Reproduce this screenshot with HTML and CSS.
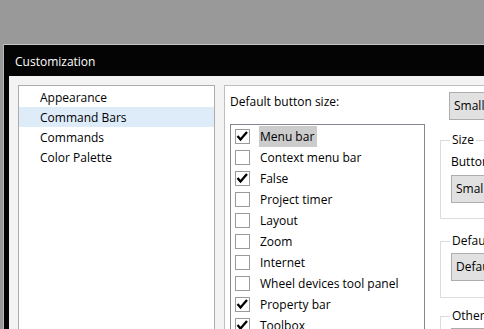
FILE: index.html
```html
<!DOCTYPE html>
<html>
<head>
<meta charset="utf-8">
<link rel="stylesheet" href="styles.css">
</head>
<body>
<div class="window">
  <div class="titlebar">Customization</div>
  <div class="client">
    <ul class="nav">
      <li>Appearance</li>
      <li class="selected">Command Bars</li>
      <li>Commands</li>
      <li>Color Palette</li>
    </ul>
    <div class="main">
      <div class="label-top">Default button size:</div>
      <div class="top-btn-cell"><div class="btn">Small</div></div>
      <ul class="checklist">
        <li><span class="cb checked"><svg viewBox="0 0 15 15"><path d="M2.5 7 L5.5 10.5 L12 3"/></svg></span><span class="txt hl">Menu bar</span></li>
        <li><span class="cb"></span><span class="txt">Context menu bar</span></li>
        <li><span class="cb checked"><svg viewBox="0 0 15 15"><path d="M2.5 7 L5.5 10.5 L12 3"/></svg></span><span class="txt">False</span></li>
        <li><span class="cb"></span><span class="txt">Project timer</span></li>
        <li><span class="cb"></span><span class="txt">Layout</span></li>
        <li><span class="cb"></span><span class="txt">Zoom</span></li>
        <li><span class="cb"></span><span class="txt">Internet</span></li>
        <li><span class="cb"></span><span class="txt">Wheel devices tool panel</span></li>
        <li><span class="cb checked"><svg viewBox="0 0 15 15"><path d="M2.5 7 L5.5 10.5 L12 3"/></svg></span><span class="txt">Property bar</span></li>
        <li><span class="cb checked"><svg viewBox="0 0 15 15"><path d="M2.5 7 L5.5 10.5 L12 3"/></svg></span><span class="txt">Toolbox</span></li>
      </ul>
      <div class="groups">
        <fieldset class="group g-size">
          <legend>Size</legend>
          <div class="glabel">Button size:</div>
          <div class="btn">Small</div>
        </fieldset>
        <fieldset class="group g-default">
          <legend>Default</legend>
          <div class="btn">Default</div>
        </fieldset>
        <fieldset class="group g-other">
          <legend>Other</legend>
          <div class="btn">Options</div>
        </fieldset>
      </div>
    </div>
  </div>
</div>
</body>
</html>
```

FILE: styles.css
```css
* { box-sizing: border-box; }
html, body {
  margin: 0;
  padding: 0;
}
body {
  background: #999999;
  height: 329px;
  overflow: hidden;
  font-family: "Open Sans", "Noto Sans", sans-serif;
  font-size: 12px;
  color: #000;
}
.window {
  margin: 44px 0 0 3px;
  width: 560px;
  height: 400px;
  background: #040404;
  border-top: 1px solid #c4c4c4;
  border-left: 1px solid #b8b8b8;
}
.titlebar {
  height: 31px;
  line-height: 31px;
  padding: 1px 0 0 11px;
  color: #ffffff;
}
.client {
  margin-left: 5px;
  height: 360px;
  background: #f3f3f3;
  display: flex;
  gap: 9px;
  padding: 9px 0 0 9px;
}
.nav {
  list-style: none;
  margin: 0;
  padding: 1px 0 0 0;
  width: 197px;
  flex: none;
  background: #fff;
  border: 1px solid #acacac;
}
.nav li {
  height: 20px;
  line-height: 20px;
  padding: 1px 0 0 21px;
  line-height: 19px;
}
.nav li.selected {
  background: #deecf9;
}
.main {
  flex: 1;
  background: #fff;
  border: 1px solid #bfbfbf;
  padding: 6px 0 0 5px;
  display: grid;
  grid-template-columns: 195px 1fr;
  grid-template-rows: 28px auto;
  column-gap: 15px;
  row-gap: 4px;
  align-content: start;
}
.label-top {
  line-height: 18px;
  padding-top: 1px;
}
.top-btn-cell {
  padding-left: 9px;
}
.btn {
  height: 28px;
  width: 90px;
  line-height: 26px;
  padding-left: 4px;
  background: #e1e1e1;
  border: 1px solid #adadad;
  white-space: nowrap;
}
.checklist {
  list-style: none;
  margin: 0;
  padding: 1px;
  height: 240px;
  border: 1px solid #828790;
}
.checklist li {
  height: 21px;
  display: flex;
  align-items: center;
  padding-left: 3px;
}
.cb {
  width: 15px;
  height: 15px;
  border: 1px solid #9a9a9a;
  background: #fff;
  flex: none;
}
.cb svg {
  display: block;
  width: 15px;
  height: 15px;
  margin: -1px 0 0 -1px;
}
.cb svg path {
  fill: none;
  stroke: #000;
  stroke-width: 2.3;
  stroke-linecap: butt;
  stroke-linejoin: miter;
}
.txt {
  margin-left: 9px;
  padding: 1px 3px 0 1px;
  height: 21px;
  line-height: 20px;
  white-space: nowrap;
}
.txt.hl {
  background: #cccccc;
}
.groups {
  padding-top: 8px;
}
.group {
  margin: 0;
  border: 1px solid #dcdcdc;
  min-width: 0;
  width: 90px;
}
.group legend {
  padding: 0 2px;
  margin-left: -1px;
  line-height: 16px;
  white-space: nowrap;
}
.g-size {
  padding: 5px 0 15px 10px;
}
.glabel {
  line-height: 18px;
  white-space: nowrap;
  margin-bottom: 4px;
}
.g-default {
  margin-top: 14px;
  padding: 4px 0 16px 10px;
}
.g-other {
  margin-top: 10px;
  padding: 4px 0 16px 10px;
}
```
